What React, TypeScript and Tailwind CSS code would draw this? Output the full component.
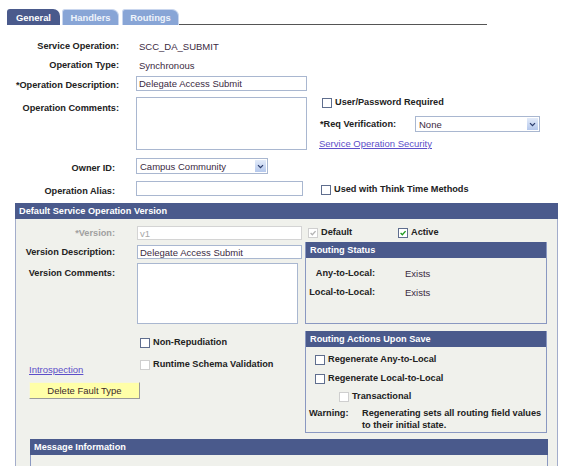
import type { ReactNode } from "react";

function Tab({ label, active = false, className = "" }: { label: string; active?: boolean; className?: string }) {
  return (
    <div
      className={`flex h-[16px] items-center justify-center rounded-tl-[3px] rounded-tr-[7px] text-[9.4px] font-bold ${
        active
          ? "bg-[#4a5a8c] text-white"
          : "border border-b-0 border-[#c9d6ee] bg-[#88a5d6] text-[#eef3fb]"
      } ${className}`}
    >
      {label}
    </div>
  );
}

function Box({ checked = false, disabled = false }: { checked?: boolean; disabled?: boolean }) {
  return (
    <span
      className={`inline-flex h-[10px] w-[10px] shrink-0 items-center justify-center border bg-white ${
        disabled ? "border-[#cfcfcf]" : "border-[#5f6e8e]"
      }`}
    >
      {checked ? (
        <svg viewBox="0 0 10 10" className="h-[8px] w-[8px]">
          <path
            d="M2 5 L4.2 7.2 L8.2 2.6"
            fill="none"
            stroke={disabled ? "#b4b4b4" : "#1f9a1f"}
            strokeWidth="1.7"
          />
        </svg>
      ) : null}
    </span>
  );
}

function Check({
  label,
  checked,
  disabled,
  className = "",
}: {
  label: string;
  checked?: boolean;
  disabled?: boolean;
  className?: string;
}) {
  return (
    <div className={`flex h-[11px] items-center ${className}`}>
      <Box checked={checked} disabled={disabled} />
      <span className="ml-[3px] text-[9.2px] font-bold text-[#222]">{label}</span>
    </div>
  );
}

function Select({ value, className = "" }: { value: string; className?: string }) {
  return (
    <div className={`flex items-center border border-[#a9b7d0] bg-white pl-[3px] ${className}`}>
      <span className="flex-1 text-[#3b2a42]">{value}</span>
      <span className="mr-[1px] flex h-[12px] w-[11px] items-center justify-center bg-gradient-to-b from-[#e3ebf9] to-[#b5c8ec]">
        <svg viewBox="0 0 8 6" className="h-[5px] w-[7px]">
          <path d="M1 1.4 L4 4.4 L7 1.4" fill="none" stroke="#2c3d6c" strokeWidth="1.5" />
        </svg>
      </span>
    </div>
  );
}

function Input({ value = "", className = "", disabled = false }: { value?: string; className?: string; disabled?: boolean }) {
  return (
    <div
      className={`flex items-center border bg-white pl-[2px] ${
        disabled ? "border-[#d4d4d4] text-[#a8a8a8]" : "border-[#a9b7d0] text-[#3b2a42]"
      } ${className}`}
    >
      {value}
    </div>
  );
}

function GroupHeader({ children }: { children: ReactNode }) {
  return (
    <div className="flex h-[16px] items-center bg-[#4a5a8c] pl-[4px] text-[9.2px] font-bold text-white">
      {children}
    </div>
  );
}

function Link({ children, className = "" }: { children: ReactNode; className?: string }) {
  return <div className={`h-[11px] text-[#5d4fc9] underline ${className}`}>{children}</div>;
}

function Label({ children, className = "" }: { children: ReactNode; className?: string }) {
  return <div className={`text-right text-[9.2px] font-bold ${className}`}>{children}</div>;
}

export default function App() {
  return (
    <div className="h-[466px] w-[577px] overflow-hidden bg-white font-['Liberation_Sans',Arial,sans-serif] text-[9.5px] leading-[11px] text-[#222]">
      {/* tabs */}
      <div className="flex w-[487px] items-end pl-[7px] pt-[9px]">
        <Tab active label="General" className="w-[53px]" />
        <Tab label="Handlers" className="ml-[2px] w-[57px]" />
        <Tab label="Routings" className="ml-[3px] w-[57px]" />
        <div className="h-[16px] flex-1 border-b border-[#555]" />
      </div>

      <div className="mt-[12px]">
        <div className="flex h-[19px] items-center">
          <Label className="w-[119px]">Service Operation:</Label>
          <div className="ml-[20px] text-[#3b2a42]">SCC_DA_SUBMIT</div>
        </div>
        <div className="flex h-[19px] items-center">
          <Label className="w-[119px]">Operation Type:</Label>
          <div className="ml-[20px] text-[#3b2a42]">Synchronous</div>
        </div>
        <div className="flex h-[19px]">
          <Label className="mt-[5px] w-[119px]">*Operation Description:</Label>
          <Input value="Delegate Access Submit" className="ml-[17px] mt-[1px] h-[15px] w-[171px]" />
        </div>

        <div className="mt-[3px] flex">
          <Label className="mt-[6px] w-[119px]">Operation Comments:</Label>
          <div className="ml-[17px] h-[53px] w-[171px] border border-[#a9b7d0] bg-white" />
          <div className="ml-[12px] flex flex-col">
            <Check label="User/Password Required" className="ml-[3px]" />
            <div className="mt-[8px] flex h-[16px] items-center">
              <div className="ml-[1px] w-[95px] text-[9.2px] font-bold">*Req Verification:</div>
              <Select value="None" className="h-[16px] w-[125px]" />
            </div>
            <Link className="mt-[6px]">Service Operation Security</Link>
          </div>
        </div>

        <div className="mt-[8px] flex h-[16px]">
          <Label className="mt-[5px] w-[115px]">Owner ID:</Label>
          <Select value="Campus Community" className="ml-[21px] h-[16px] w-[132px]" />
        </div>

        <div className="mt-[7px] flex">
          <Label className="mt-[5px] w-[115px]">Operation Alias:</Label>
          <Input className="ml-[21px] h-[15px] w-[167px]" />
          <Check label="Used with Think Time Methods" className="ml-[18px] mt-[3px]" />
        </div>
      </div>

      {/* Default Service Operation Version */}
      <div className="ml-[15px] mt-[6px] w-[543px]">
        <GroupHeader>Default Service Operation Version</GroupHeader>
        <div className="border-x border-[#a3adcb] bg-[#f0f1ec] pb-[7px]">
          <div className="flex">
            {/* left column */}
            <div className="w-[289px] pt-[7px]">
              <div className="flex h-[14px] items-center">
                <Label className="w-[99px] text-[#a0a0a0]">*Version:</Label>
                <Input value="v1" disabled className="ml-[22px] h-[14px] w-[165px]" />
              </div>
              <div className="mt-[5px] flex h-[14px] items-center">
                <Label className="w-[99px]">Version Description:</Label>
                <Input value="Delegate Access Submit" className="ml-[22px] h-[14px] w-[165px]" />
              </div>
              <div className="mt-[4px] flex">
                <Label className="mt-[5px] w-[99px]">Version Comments:</Label>
                <div className="ml-[22px] h-[61px] w-[161px] border border-[#a9b7d0] bg-white" />
              </div>
              <div className="flex">
                <div className="w-[124px] pl-[13px]">
                  <Link className="mt-[40px]">Introspection</Link>
                  <button
                    type="button"
                    className="mt-[7px] flex h-[17px] w-[111px] items-center justify-center border border-b-[#9a9a9a] border-l-[#f4f4e0] border-r-[#9a9a9a] border-t-[#f4f4e0] bg-[#ffffa8] text-[#3d2a2a]"
                  >
                    Delete Fault Type
                  </button>
                </div>
                <div>
                  <Check label="Non-Repudiation" className="mt-[13px]" />
                  <Check label="Runtime Schema Validation" disabled className="mt-[11px]" />
                </div>
              </div>
            </div>

            {/* right column */}
            <div className="w-[242px] pt-[8px]">
              <div className="flex">
                <Check label="Default" checked disabled className="ml-[3px] w-[90px]" />
                <Check label="Active" checked />
              </div>

              <div className="mt-[4px] border-x border-b border-[#8a98c1]">
                <GroupHeader>Routing Status</GroupHeader>
                <div className="h-[65px] pt-[10px]">
                  <div className="flex h-[11px]">
                    <Label className="w-[69px]">Any-to-Local:</Label>
                    <div className="ml-[30px] text-[#3b2a42]">Exists</div>
                  </div>
                  <div className="mt-[8px] flex h-[11px]">
                    <Label className="w-[69px]">Local-to-Local:</Label>
                    <div className="ml-[30px] text-[#3b2a42]">Exists</div>
                  </div>
                </div>
              </div>

              <div className="mt-[7px] border-x border-b border-[#8a98c1]">
                <GroupHeader>Routing Actions Upon Save</GroupHeader>
                <div className="pb-[1px] pt-[7px]">
                  <Check label="Regenerate Any-to-Local" className="ml-[9px]" />
                  <Check label="Regenerate Local-to-Local" className="ml-[9px] mt-[8px]" />
                  <Check label="Transactional" disabled className="ml-[33px] mt-[7px]" />
                  <div className="mt-[5px] flex pl-[3px] text-[9.2px] font-bold leading-[12px]">
                    <div className="w-[53px]">Warning:</div>
                    <div className="w-[184px]">
                      Regenerating sets all routing field values to their initial state.
                    </div>
                  </div>
                </div>
              </div>
            </div>
          </div>

          <div className="ml-[14px] mt-[6px] w-[518px]">
            <GroupHeader>Message Information</GroupHeader>
            <div className="h-[40px] border-x border-[#8a98c1]" />
          </div>
        </div>
      </div>
    </div>
  );
}
